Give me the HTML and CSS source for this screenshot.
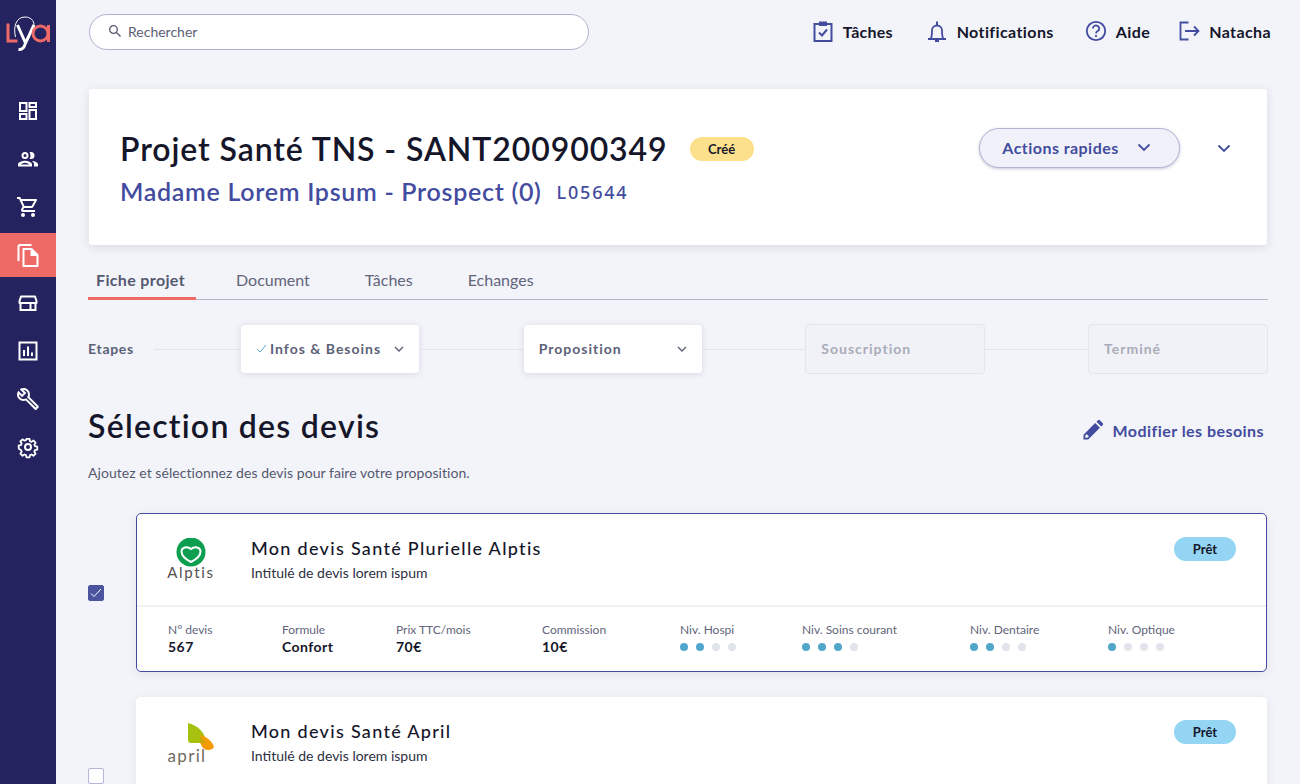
FILE: index.html
```html
<!DOCTYPE html>
<html lang="fr">
<head>
<meta charset="utf-8">
<title>Lya - Projet</title>
<link rel="stylesheet" href="styles.css">
</head>
<body>
<div class="app">
  <nav class="side">
    <div class="logo">
      <svg width="56" height="56" viewBox="0 0 56 56" fill="none">
        <path d="M15.500 37C13 27 16 17 25 17C30 17 34 20 34 25C34 27 33.500 29 33 30" stroke="#fff" stroke-width="1"/>
        <path d="M8 23.500V41H17.500" stroke="#ee6a66" stroke-width="3"/>
        <path d="M17.500 25L25.500 43M34 25L25.500 43C24.500 47 22 50 18.500 49.500" stroke="#fff" stroke-width="3"/>
        <circle cx="40.500" cy="33.500" r="7.500" stroke="#ee6a66" stroke-width="3"/>
        <path d="M48.500 25V42" stroke="#ee6a66" stroke-width="3"/>
      </svg>
    </div>
    <a class="nav-item"><svg width="24" height="24" viewBox="0 0 24 24" fill="none" stroke="#fff" stroke-width="2"><rect x="4" y="4" width="6.500" height="8"/><rect x="13.500" y="4" width="6.500" height="4"/><rect x="13.500" y="11" width="6.500" height="9"/><rect x="4" y="15" width="6.500" height="5"/></svg></a>
    <a class="nav-item"><svg width="24" height="24" viewBox="0 0 24 24" fill="#fff"><path d="M9 13.800c-2.300 0-7 1.200-7 3.500V19.500h14v-2.200c0-2.300-4.700-3.500-7-3.500zm-4.600 3.700c.8-.6 2.900-1.700 4.600-1.700s3.800 1.100 4.600 1.700H4.400zM9 12a3.500 3.500 0 100-7 3.500 3.500 0 000 7zm0-5a1.500 1.500 0 110 3 1.500 1.500 0 010-3zm7 7c1.200.9 2 2 2 3.300v2.200h4v-2.200c0-2-3.500-3.100-6-3.300zM15 12a3.500 3.500 0 000-7c-.5 0-1 .1-1.500.3.600.9 1 2 1 3.200s-.4 2.300-1 3.200c.5.200 1 .3 1.500.3z"/></svg></a>
    <a class="nav-item"><svg width="24" height="24" viewBox="0 0 24 24" fill="#fff"><path d="M15.550 13c.750 0 1.410-.41 1.750-1.030l3.580-6.490A1 1 0 0020.010 4H5.210l-.94-2H1v2h2l3.600 7.590-1.350 2.440C4.520 15.370 5.480 17 7 17h12v-2H7l1.100-2h7.450zM6.160 6h12.150l-2.760 5H8.530L6.160 6zM7 18a2 2 0 100 4 2 2 0 000-4zm10 0a2 2 0 100 4 2 2 0 000-4z"/></svg></a>
    <a class="nav-item active"><svg width="24" height="24" viewBox="0 0 24 24" fill="none" stroke="#fff" stroke-width="2"><path d="M15.500 2H4a1.500 1.500 0 00-1.500 1.500V18"/><path d="M7.500 6h8l6 6v11h-14z" stroke-linejoin="round"/><path d="M15.500 6v6h6" fill="#fff"/></svg></a>
    <a class="nav-item"><svg width="24" height="24" viewBox="0 0 24 24" fill="none" stroke="#fff" stroke-width="2"><path d="M5 5.500h14l1.500 4.500v2h-17v-2z" stroke-linejoin="round"/><path d="M4.500 12v7h15v-7M14.500 12v7"/></svg></a>
    <a class="nav-item"><svg width="24" height="24" viewBox="0 0 24 24" fill="none" stroke="#fff" stroke-width="2"><rect x="3.500" y="3.500" width="17" height="17"/><path d="M8 17v-6M12 17V7.500M16 17v-3.500"/></svg></a>
    <a class="nav-item"><svg width="24" height="24" viewBox="0 0 24 24" fill="#fff"><path d="M22.610 18.990l-9.080-9.080c.93-2.340.45-5.100-1.440-7C9.790.610 6.210.4 3.660 2.260L7.500 6.110 6.080 7.520 2.250 3.690C.390 6.230.600 9.820 2.900 12.110c1.860 1.860 4.570 2.350 6.880 1.480l9.110 9.110c.39.39 1.020.39 1.410 0l2.300-2.300c.4-.38.4-1.010.01-1.410zm-3 1.600l-9.460-9.460c-.61.450-1.290.72-2 .82-1.360.2-2.790-.21-3.830-1.250C3.370 9.760 2.930 8.500 3 7.260l3.090 3.090 4.240-4.240-3.090-3.090c1.240-.07 2.490.37 3.440 1.310 1.080 1.080 1.490 2.570 1.240 3.960-.12.710-.42 1.370-.88 1.960l9.450 9.450-.88.88z"/></svg></a>
    <a class="nav-item"><svg width="24" height="24" viewBox="0 0 24 24" fill="none" stroke="#fff" stroke-width="2" stroke-linejoin="round"><circle cx="12" cy="12" r="3"/><path d="M10.300 3h3.400l.5 2.600 1.700.7 2.200-1.500 2.400 2.400-1.500 2.200.7 1.700 2.600.5v3.400l-2.600.5-.7 1.700 1.500 2.200-2.400 2.400-2.200-1.500-1.700.7-.5 2.600h-3.400l-.5-2.600-1.700-.7-2.200 1.500-2.400-2.400 1.500-2.200-.7-1.700L1.700 13.700v-3.400l2.600-.5.700-1.700L3.500 5.900l2.400-2.400 2.200 1.500 1.700-.7z" transform="translate(12 12) scale(.9) translate(-12 -12)"/></svg></a>
  </nav>

  <main class="main">
    <header class="top">
      <label class="search">
        <svg width="14" height="14" viewBox="0 0 14 14" fill="none" stroke="#55586f" stroke-width="1.300"><circle cx="5.500" cy="5.500" r="3.800"/><path d="M8.500 8.500L12.500 12.500"/></svg>
        <span>Rechercher</span>
      </label>
      <div class="top-links">
        <a class="top-link"><svg width="24" height="24" viewBox="0 0 24 24" fill="none" stroke="#434c9f" stroke-width="2"><path d="M8 5H3.500v17h17V5H16"/><path d="M8 2.500h8V7H8z" fill="#434c9f" stroke="none"/><path d="M8 13.500l3 3 5-6"/></svg>Tâches</a>
        <a class="top-link"><svg width="24" height="24" viewBox="0 0 24 24" fill="none" stroke="#434c9f" stroke-width="1.800"><path d="M3 20h18M5.500 20c1.500-2 1.500-4.500 1.500-8.500a5 5 0 0110 0c0 4 0 6.500 1.500 8.500"/><path d="M12 2.500v4" stroke-width="2"/><path d="M10 22h4" stroke-width="2"/></svg>Notifications</a>
        <a class="top-link"><svg width="24" height="24" viewBox="0 0 24 24" fill="none" stroke="#434c9f" stroke-width="1.800"><circle cx="12" cy="12" r="9.200"/><path d="M8.800 9.600a3.200 3.200 0 116 1.600c-1.200 1.200-2.800 1.400-2.800 3.400"/><path d="M12 16v2"/></svg>Aide</a>
        <a class="top-link"><svg width="24" height="24" viewBox="0 0 24 24" fill="none" stroke="#434c9f" stroke-width="1.800"><path d="M11.500 3.500H3.500v17h8"/><path d="M8 12h13.500M17 7.500l4.500 4.500-4.500 4.500"/></svg>Natacha</a>
      </div>
    </header>

    <section class="hero">
      <div class="hero-text">
        <div class="hero-title"><h1>Projet Santé TNS - SANT200900349</h1><span class="badge created">Créé</span></div>
        <div class="hero-sub"><span class="person">Madame Lorem Ipsum - Prospect (0)</span><span class="code">L05644</span></div>
      </div>
      <div class="hero-actions">
        <button class="quick">Actions rapides<svg class="chev" width="14" height="9" viewBox="0 0 14 9" fill="none" stroke="#434c9f" stroke-width="1.800"><path d="M1.500 1.500L7 7l5.500-5.500"/></svg></button>
        <svg class="chev" width="14" height="9" viewBox="0 0 14 9" fill="none" stroke="#434c9f" stroke-width="1.800"><path d="M1.500 1.500L7 7l5.500-5.500"/></svg>
      </div>
    </section>

    <div class="tabs">
      <a class="tab on">Fiche projet</a>
      <a class="tab">Document</a>
      <a class="tab">Tâches</a>
      <a class="tab">Echanges</a>
    </div>

    <div class="steps">
      <span class="steps-label">Etapes</span>
      <span class="line l1"></span>
      <div class="step live"><svg width="11" height="9" viewBox="0 0 11 9" fill="none" stroke="#5aa9cb" stroke-width="1"><path d="M1 5l3 3 6-7"/></svg><b>Infos &amp; Besoins</b><svg class="end" width="10" height="7" viewBox="0 0 10 7" fill="none" stroke="#5c6178" stroke-width="1.400"><path d="M1 1l4 4 4-4"/></svg></div>
      <span class="line"></span>
      <div class="step live"><b>Proposition</b><svg class="end" width="10" height="7" viewBox="0 0 10 7" fill="none" stroke="#5c6178" stroke-width="1.400"><path d="M1 1l4 4 4-4"/></svg></div>
      <span class="line"></span>
      <div class="step off"><b>Souscription</b></div>
      <span class="line"></span>
      <div class="step off"><b>Terminé</b></div>
    </div>

    <div class="sel-head">
      <h2>Sélection des devis</h2>
      <a class="edit"><svg width="22" height="22" viewBox="0 0 22 22" fill="#434c9f"><path d="M1.500 20.500v-4.700L13.200 4.100l4.700 4.700L6.200 20.500zM3.300 18.700h2.100l10-10-2.100-2.100-10 10zM14.500 2.800l1.600-1.600a1.200 1.200 0 011.700 0l3 3a1.200 1.200 0 010 1.700l-1.600 1.600z"/><path d="M4 14.500l9.200-9.200 3.500 3.500L7.500 18z"/></svg>Modifier les besoins</a>
    </div>
    <p class="hint">Ajoutez et sélectionnez des devis pour faire votre proposition.</p>

    <div class="row first">
      <span class="check on"><svg width="12" height="10" viewBox="0 0 12 10" fill="none" stroke="#fff" stroke-width="1"><path d="M1 5.500l3 3 7-7.500"/></svg></span>
      <article class="card selected">
        <div class="card-top">
          <div class="brand">
            <svg width="48" height="44" viewBox="0 0 48 44" fill="none"><circle cx="24" cy="14" r="14.500" fill="#0d9e4f"/><path d="M24 24c-5-2.500-9.500-6-9.500-10.500 0-4.500 6-5.500 9.500-2.500 3.500-3 9.500-2 9.500 2.500 0 4.500-4.500 8-9.500 10.500z" stroke="#fff" stroke-width="2"/><text x="24" y="40" text-anchor="middle" class="logo-word">Alptis</text></svg>
          </div>
          <div class="card-title"><h3>Mon devis Santé Plurielle Alptis</h3><p>Intitulé de devis lorem ispum</p></div>
          <span class="badge ready">Prêt</span>
        </div>
        <div class="card-info">
          <div class="col"><small>N° devis</small><strong>567</strong></div>
          <div class="col"><small>Formule</small><strong>Confort</strong></div>
          <div class="col"><small>Prix TTC/mois</small><strong>70€</strong></div>
          <div class="col"><small>Commission</small><strong>10€</strong></div>
          <div class="col"><small>Niv. Hospi</small><span class="dots"><i class="f"></i><i class="f"></i><i></i><i></i></span></div>
          <div class="col"><small>Niv. Soins courant</small><span class="dots"><i class="f"></i><i class="f"></i><i class="f"></i><i></i></span></div>
          <div class="col"><small>Niv. Dentaire</small><span class="dots"><i class="f"></i><i class="f"></i><i></i><i></i></span></div>
          <div class="col"><small>Niv. Optique</small><span class="dots"><i class="f"></i><i></i><i></i><i></i></span></div>
        </div>
      </article>
    </div>

    <div class="row">
      <span class="check"></span>
      <article class="card plain">
        <div class="card-top">
          <div class="brand">
            <svg width="48" height="44" viewBox="0 0 48 44" fill="none"><path d="M21 2c9 2 17 9 18 19-2 1-4 1-6 1H24c-2 0-3-1-3-3z" fill="#a6c20f"/><path d="M33 14c6 1 12 6 14 12-1 2-3 3-6 3-6 0-9-7-8-15z" fill="#f39a05"/><path d="M33 15l6 6-1 1h-5z" fill="#c9a70a"/><text x="20" y="41" text-anchor="middle" class="logo-word april">april</text></svg>
          </div>
          <div class="card-title"><h3>Mon devis Santé April</h3><p>Intitulé de devis lorem ispum</p></div>
          <span class="badge ready">Prêt</span>
        </div>
      </article>
    </div>
  </main>
</div>
</body>
</html>
```

FILE: styles.css
```css
* { box-sizing: border-box; }
html, body { margin: 0; height: 100%; overflow: hidden; }
body { background: #f3f4f9; color: #15162a; font-family: "Lato", "Noto Sans", sans-serif; }
h1, h2, h3, p { margin: 0; }
.app { display: flex; height: 784px; overflow: hidden; }

.side { width: 56px; flex: none; background: #24235f; display: flex; flex-direction: column; }
.logo { height: 87px; }
.logo svg { display: block; }
.nav-item { height: 48px; display: flex; align-items: center; justify-content: center; }
.nav-item.active { background: #ee6a66; height: 44px; }
.nav-item:nth-child(5) { margin-top: 2px; margin-bottom: 2px; }

.main { flex: 1; min-width: 0; padding: 14px 32px 0; }
.top { display: flex; justify-content: space-between; align-items: center; height: 36px; padding-left: 1px; }
.search { width: 500px; height: 36px; border: 1px solid #aeb1d1; border-radius: 18px; background: #fff; display: flex; align-items: center; gap: 6px; padding: 0 0 2px 18px; font-size: 14px; color: #5d6076; }
.top-links { display: flex; gap: 30px; margin: -2px -3px 0 0; }
.top-link { display: flex; align-items: center; gap: 8px; font-size: 16px; font-weight: 700; letter-spacing: .4px; color: #15162a; }
.top-link:first-child { letter-spacing: .2px; margin-right: 2px; }
.top-link:last-child { margin-left: -3px; }

.hero { margin: 39px 1px 0; height: 156px; background: #fff; border-radius: 3px; box-shadow: 0 2px 8px rgba(60, 65, 120, .14); display: flex; justify-content: space-between; padding: 39px 36px 0 31px; }
.hero-title { display: flex; align-items: center; gap: 22px; }
h1 { font-size: 32px; font-weight: 600; line-height: 42px; letter-spacing: .91px; color: #15162a; white-space: nowrap; }
.hero-sub { display: flex; align-items: center; gap: 15px; margin-top: 4px; }
.person { font-size: 25px; font-weight: 600; color: #434c9f; line-height: 34px; letter-spacing: .7px; white-space: nowrap; }
.code { font-size: 18px; font-weight: 500; letter-spacing: 1.800px; color: #434c9f; font-family: "Noto Sans", sans-serif; padding-top: 2px; }
.badge { display: inline-flex; align-items: center; justify-content: center; height: 24px; border-radius: 12px; font-size: 13px; font-weight: 700; color: #15162a; width: 62px; flex: none; }
.created { width: 64px; background: #fde08b; }
.ready { background: #93d5f2; }
.hero-actions { display: flex; align-items: flex-start; gap: 37px; }
.hero-actions > .chev { margin-top: 16px; }
.quick { width: 201px; height: 40px; border: 1px solid #b2b5d7; border-radius: 20px; background: #f1f2f9; box-shadow: 0 1px 3px rgba(60, 65, 120, .3); font: 700 16px "Lato", sans-serif; letter-spacing: .45px; color: #434c9f; display: flex; align-items: center; justify-content: center; gap: 18px; padding: 0 6px 2px 0; }

.tabs { margin-top: 20px; height: 35px; border-bottom: 1px solid #b5b6c8; display: flex; gap: 40px; }
.tab { position: relative; padding: 5px 8px 0; font-size: 16px; color: #61647a; height: 35px; margin-right: -1px; }
.tab.on { font-weight: 700; color: #555970; width: 108px; white-space: nowrap; margin-right: -8px; letter-spacing: .35px; }
.tab.on::after { content: ""; position: absolute; left: 0; right: 0; bottom: 0; height: 3px; background: #ee6a66; }

.steps { margin-top: 24px; height: 50px; display: flex; align-items: center; }
.steps-label { font-size: 14px; font-weight: 700; letter-spacing: .7px; color: #5c6178; width: 66px; flex: none; padding-bottom: 2px; }
.line { flex: 1; height: 1px; background: #e2e3ec; }
.l1 { flex: none; width: 86px; }
.step { width: 180px; height: 50px; flex: none; border-radius: 4px; display: flex; align-items: center; padding: 0 15px 2px; font-size: 14px; letter-spacing: 1px; color: #5c6178; }
.step b { font-weight: 700; }
.step.live { background: #fff; width: 178px; height: 48px; margin: 0 1px; box-shadow: 0 1px 6px rgba(60, 65, 120, .16); }
.step.live svg:first-child { margin-right: 3px; }
.step .end { margin: 3px 0 0 auto; }
.step.off { background: #f1f2f7; border: 1px solid #e3e4ec; color: #a9abb9; }

.sel-head { margin-top: 28px; display: flex; justify-content: space-between; align-items: center; height: 46px; }
h2 { font-size: 32px; font-weight: 600; letter-spacing: 1.250px; color: #15162a; }
.edit { display: flex; align-items: center; gap: 9px; font-size: 16px; font-weight: 700; letter-spacing: .45px; color: #434c9f; margin: 10px 4px 0 0; }
.hint { margin-top: 15px; font-size: 14px; line-height: 20px; color: #55586f; letter-spacing: .05px; }

.row { display: flex; align-items: center; gap: 32px; margin-top: 25px; padding-right: 1px; }
.row.first { margin-top: 30px; }
.check { width: 16px; height: 16px; flex: none; border: 1px solid #b2b5d7; border-radius: 2px; background: #fff; display: flex; align-items: center; justify-content: center; }
.check.on { background: #4b549f; border-color: #4b549f; }
.row:last-child { align-items: flex-start; }
.row:last-child .check { margin-top: 71px; }
.card { flex: 1; background: #fff; border: 1px solid transparent; border-radius: 5px; box-shadow: 0 2px 10px rgba(60, 65, 120, .1); }
.card.selected { border-color: #434c9f; }
.card.plain { border-top-width: 0; }
.card-top { display: flex; align-items: flex-start; height: 91px; padding: 19px 30px 0 30px; }
.brand { width: 84px; flex: none; height: 54px; padding-top: 5px; }
.brand svg { display: block; }
.logo-word { font: 400 15px "Lato", sans-serif; fill: #54504e; letter-spacing: 1.700px; }
.april { fill: #716a5e; font-size: 17px; letter-spacing: 1.300px; }
.card-title { flex: 1; padding-top: 3px; }
h3 { font-size: 18px; font-weight: 500; letter-spacing: 1.300px; line-height: 24px; color: #15162a; }
.card-title p { font-size: 14px; line-height: 20px; margin-top: 3px; color: #2d2f42; }
.card-top .badge { margin-top: 4px; }
.card-info { height: 66px; border-top: 2px solid #f1f2f5; display: grid; grid-template-columns: 114px 114px 146px 138px 122px 168px 138px 1fr; padding: 15px 0 0 31px; }
.col { display: flex; flex-direction: column; }
small { font-size: 12px; line-height: 16px; color: #62657c; white-space: nowrap; }
strong { font-size: 14px; font-weight: 700; letter-spacing: .45px; line-height: 18px; color: #15162a; }
.dots { display: flex; gap: 8px; margin-top: 5px; }
.dots i { width: 8px; height: 8px; border-radius: 50%; background: #e2e4ec; }
.dots i.f { background: #51a6cc; }
```
